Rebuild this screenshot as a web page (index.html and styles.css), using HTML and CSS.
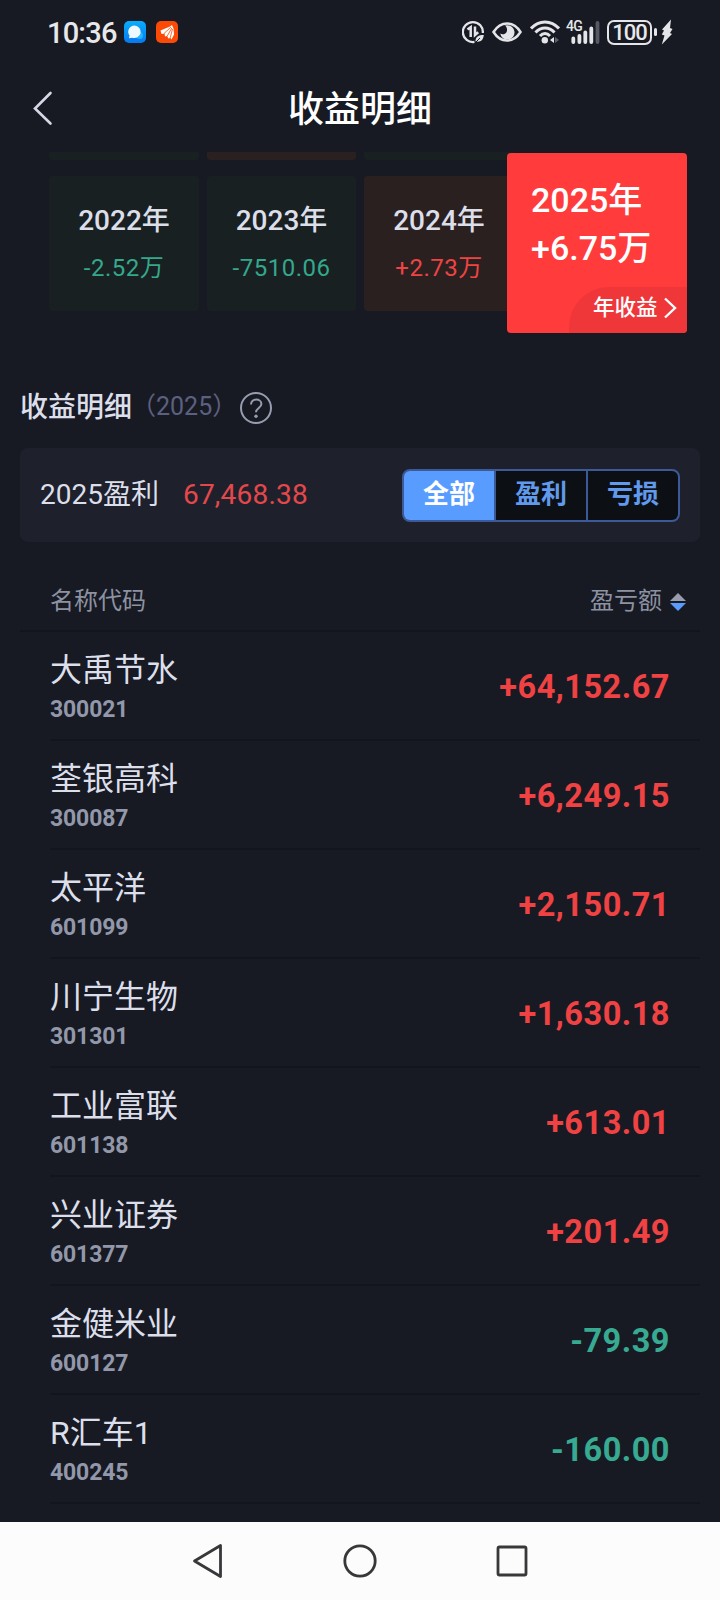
FILE: index.html
```html
<!DOCTYPE html>
<html lang="zh-CN">
<head>
<meta charset="utf-8">
<title>收益明细</title>
<link rel="stylesheet" href="styles.css">
</head>
<body>
<div class="screen">
  <div class="status">
    <span class="clock">10:36</span>
    <svg class="app-chat" width="22" height="22" viewBox="0 0 22 22"><defs><linearGradient id="g" x1="0" y1="0" x2="0" y2="1"><stop offset="0" stop-color="#08aefc"/><stop offset="1" stop-color="#0878ee"/></linearGradient></defs><rect width="22" height="22" rx="5" fill="url(#g)"/><circle cx="15.500" cy="14.500" r="3.500" fill="#22b6ff"/><path d="M10.500 4.500a6.500 6.300 0 1 1-2.500 12.200l-3 .6.500-2.800A6.500 6.300 0 0 1 10.500 4.500z" fill="#eefaff"/></svg>
    <svg class="app-trade" width="22" height="22" viewBox="0 0 22 22"><rect width="22" height="22" rx="5" fill="#fb4a05"/><path d="M4.500 9.500 14 5.500 16 4l1.500 3.500.5 6-2.500 5-1-1.500-2 .5-1.500-2.500-2 .5-.5-3-3 .5z" fill="#fff"/><path d="M8 12.500 15 6M11 15.500 15.800 7M14 17.500 16.500 8" stroke="#fb4a05" stroke-width=".8" fill="none"/></svg>
    <div class="indicators">
      <svg width="22" height="24" viewBox="0 0 22 24" fill="none" stroke="#e4e5e8" stroke-width="2.300"><path d="M12.500 21.900A10 10 0 1 1 20.800 13"/><path d="M5.500 9.500 8.700 7.200V17M13 6.500V15l3.200-2.800" stroke-width="2.500"/><path d="M13.500 21.500c0-5 3-6.500 8.300-6.500-.5 5-3 7.500-8.300 6.500z" fill="#e4e5e8" stroke="none"/><path d="M13 23l5-5" stroke="#171a23" stroke-width="1"/></svg>
      <svg width="30" height="20" viewBox="0 0 30 20"><path d="M1.500 10C5 4.500 9.500 1.500 15 1.500S25 4.500 28.500 10C25 15.500 20.500 18.500 15 18.500S5 15.500 1.500 10z" fill="none" stroke="#e4e5e8" stroke-width="2.500"/><path d="M15 3.200a7.200 7.200 0 1 1-6.800 8.300c2 1.600 5.800.8 6.600-2 .8-2.600-.3-4.800-1.800-6z" fill="#e4e5e8"/></svg>
      <svg width="30" height="24" viewBox="0 0 30 24" fill="none" stroke="#e4e5e8" stroke-width="3"><path d="M1 8.500C9-.2 21-.2 29 8.500M5.500 12.500c5.500-6 13.500-6 19 0M10 16c3-3.200 7-3.200 10 0"/><circle cx="14.800" cy="20.300" r="3.200" fill="#e4e5e8" stroke="none"/><path d="M24 17v6l-4-3z" fill="#e4e5e8" stroke="none"/><path d="M25 17v6l4-3z" fill="#5d616b" stroke="none"/></svg>
      <div class="signal"><span class="gen">4G</span><svg width="30" height="23" viewBox="0 0 30 23" stroke="#e4e5e8" stroke-width="3.800" stroke-linecap="round"><path d="M3.300 17.500v3.500M9.400 15v6M15.300 11.500V21M21.300 7.500V21"/><path d="M27.500 2v19" stroke="#555963"/></svg></div>
      <div class="battery"><span>100</span></div>
      <i class="battery-tip"></i>
      <svg class="bolt" width="12" height="26" viewBox="0 0 12 26"><path d="M10 .5 1 10.500 3 11.500.8 15.500 3.500 16.500.8 25.500 11 15 9 14l2.500-4L9 9z" fill="#e4e5e8"/></svg>
    </div>
  </div>

  <header class="title-bar">
    <svg class="back" width="20" height="36" viewBox="0 0 20 36" fill="none" stroke="#d5d9e6" stroke-width="2.600" stroke-linecap="round"><path d="M17.500 3 2 18.500 17.500 33.500"/></svg>
    <h1>收益明细</h1>
  </header>

  <section class="years">
    <div class="grid previous"><div class="loss"></div><div class="gain"></div><div class="loss"></div></div>
    <div class="grid current">
      <div class="year loss"><b>2022年</b><span>-2.52万</span></div>
      <div class="year loss"><b>2023年</b><span>-7510.06</span></div>
      <div class="year gain"><b>2024年</b><span>+2.73万</span></div>
    </div>
    <div class="selected">
      <b>2025年</b><b>+6.75万</b>
      <div class="more">年收益<svg width="13" height="22" viewBox="0 0 13 22" fill="none" stroke="#fff" stroke-width="2.400"><path d="m1 1.500 10 9.500L1 20.500"/></svg></div>
    </div>
  </section>

  <div class="section-title"><h2>收益明细</h2><span class="period">（2025）</span>
    <svg class="help" width="34" height="34" viewBox="0 0 34 34" fill="none" stroke="#979daf" stroke-width="2"><circle cx="17" cy="17" r="15"/><path d="M12 13.500c0-6.800 10.400-6.200 10.400-.5 0 4-5.400 4-5.400 8.200"/><circle cx="17" cy="25.300" r="1.700" fill="#979daf" stroke="none"/></svg>
  </div>

  <div class="summary">
    <span class="label">2025盈利</span><span class="total">67,468.38</span>
    <div class="tabs"><span class="on">全部</span><span>盈利</span><span>亏损</span></div>
  </div>

  <div class="table-head"><span>名称代码</span><span class="sort">盈亏额<svg width="16" height="18" viewBox="0 0 16 18"><path d="M8 0l8 8H0z" fill="#979daf"/><path d="M8 18l8-8H0z" fill="#599cfc"/></svg></span></div>
  <ul class="rows">
    <li><div><p>大禹节水</p><small>300021</small></div><strong class="up">+64,152.67</strong></li>
    <li><div><p>荃银高科</p><small>300087</small></div><strong class="up">+6,249.15</strong></li>
    <li><div><p>太平洋</p><small>601099</small></div><strong class="up">+2,150.71</strong></li>
    <li><div><p>川宁生物</p><small>301301</small></div><strong class="up">+1,630.18</strong></li>
    <li><div><p>工业富联</p><small>601138</small></div><strong class="up">+613.01</strong></li>
    <li><div><p>兴业证券</p><small>601377</small></div><strong class="up">+201.49</strong></li>
    <li><div><p>金健米业</p><small>600127</small></div><strong class="down">-79.39</strong></li>
    <li><div><p>R汇车1</p><small>400245</small></div><strong class="down">-160.00</strong></li>
  </ul>

  <nav class="system-nav">
    <svg width="32" height="36" viewBox="0 0 32 36"><path d="M28.500 2.500v31L2.500 18z"/></svg>
    <svg width="36" height="36" viewBox="0 0 36 36"><circle cx="18" cy="18" r="15.200"/></svg>
    <svg width="36" height="36" viewBox="0 0 36 36"><rect x="4" y="4" width="28" height="28" rx="1.500"/></svg>
  </nav>
</div>
</body>
</html>
```
FILE: styles.css
```css
* { box-sizing: border-box; }
body { margin: 0; background: #171a23; font-family: Roboto, "Noto Sans CJK SC", sans-serif; color: #dcdfea; }
h1, h2, p, ul { margin: 0; padding: 0; font-weight: 400; }
svg { display: block; flex: none; }
.screen { width: 720px; height: 1600px; overflow: hidden; display: flex; flex-direction: column; }
.status { height: 64px; flex: none; display: flex; align-items: center; padding: 0 46px 0 47px; color: #e8e8ea; }
.clock { width: 77px; font-size: 29px; line-height: 62px; padding-top: 2px; font-weight: 500; letter-spacing: -.8px; }
.app-trade { margin-left: 10px; }
.indicators { margin-left: auto; display: flex; align-items: center; }
.indicators > svg:nth-child(2) { margin-left: 8px; }
.indicators > svg:nth-child(3) { margin-left: 8px; }
.signal { position: relative; width: 32px; margin-left: 8px; padding-left: 2px; }
.gen { position: absolute; left: -2px; top: -1px; font-size: 14px; line-height: 13px; font-weight: 500; letter-spacing: -.8px; }
.battery { width: 45px; height: 25px; margin-left: 7px; border: 2px solid #e4e5e8; border-radius: 7px; font-size: 22px; line-height: 22px; font-weight: 500; text-align: center; letter-spacing: -1px; }
.battery-tip { width: 3px; height: 8px; margin-left: 2px; border-radius: 2px; background: #e4e5e8; }
.bolt { margin-left: 4px; margin-right: 1px; }
.title-bar { height: 88px; flex: none; display: grid; grid-template-columns: 33px 1fr 33px; align-items: center; }
.back { margin-left: 33px; }
.title-bar h1 { text-align: center; font-size: 36px; line-height: 40px; padding-top: 3px; font-weight: 500; color: #fff; }
.years { position: relative; height: 208px; flex: none; padding-left: 49px; }
.grid { display: grid; grid-template-columns: 150px 149px 150px; column-gap: 8px; }
.previous { height: 8px; }
.previous div { border-radius: 0 0 4px 4px; }
.current { height: 135px; margin-top: 16px; }
.loss { background: #192021; }
.gain { background: #2b2020; }
.year { border-radius: 4px; display: flex; flex-direction: column; align-items: center; padding-top: 27px; }
.year b { font-size: 28px; line-height: 36px; font-weight: 500; }
.year span { font-size: 24px; line-height: 34px; margin-top: 12px; letter-spacing: .5px; color: #34a88c; }
.year.gain span { color: #ee4444; }
.selected { position: absolute; left: 507px; top: 1px; width: 180px; height: 180px; border-radius: 4px; overflow: hidden; background: #ff3b3c; color: #fff; padding: 23px 0 0 24px; display: flex; flex-direction: column; }
.selected b { font-size: 34px; line-height: 48px; font-weight: 500; }
.more { margin: auto 0 0 38px; height: 46px; border-radius: 40px 0 0; background: #ef3739; padding-left: 24px; display: flex; align-items: center; gap: 6px; font-size: 21.500px; line-height: 42px; font-weight: 500; padding-bottom: 5px; }
.section-title { height: 88px; flex: none; display: flex; align-items: center; padding: 7px 0 0 20px; }
.section-title h2 { width: 112px; font-size: 28px; line-height: 40px; font-weight: 500; white-space: nowrap; }
.period { width: 108px; font-size: 25px; line-height: 36px; color: #5c6080; white-space: nowrap; margin-left: -1px; padding-bottom: 2px; }
.summary { margin: 0 20px; height: 94px; flex: none; display: flex; align-items: center; padding: 0 20px; border-radius: 8px; background: #1e212c; }
.label { width: 143px; font-size: 28px; line-height: 40px; padding-bottom: 1px; }
.total { font-size: 28px; line-height: 40px; letter-spacing: .2px; color: #e5484b; padding-bottom: 1px; }
.tabs { margin-left: auto; width: 278px; height: 53px; display: grid; grid-template-columns: 1fr 1fr 1fr; gap: 2px; border: 2px solid #3c5a98; border-radius: 8px; overflow: hidden; background: #3c5a98; }
.tabs span { background: #0c1014; text-align: center; font-size: 26px; line-height: 46px; font-weight: 700; color: #619aec; }
.tabs .on { background: #599cff; color: #fff; }
.table-head { margin: 0 20px; height: 90px; flex: none; display: flex; justify-content: space-between; align-items: flex-start; border-bottom: 2px solid #12151c; padding: 39px 14px 0 30px; font-size: 24px; line-height: 40px; color: #8d92a2; }
.sort { display: flex; align-items: center; gap: 8px; }
.sort svg { margin-top: 1px; }
.rows { list-style: none; flex: 1; margin: 0 20px 0 50px; }
.rows li { height: 109px; border-bottom: 2px solid #12151c; display: flex; justify-content: space-between; padding-right: 30px; }
.rows p { font-size: 32px; line-height: 44px; margin-top: 16px; }
.rows small { display: block; font-size: 23px; line-height: 30px; margin-top: 3px; font-weight: 700; letter-spacing: -.15px; color: #9298aa; }
.rows strong { font-size: 32.500px; line-height: 111px; letter-spacing: .5px; font-weight: 700; }
.up { color: #f04243; }
.down { color: #38aa92; }
.system-nav { height: 78px; flex: none; background: #fcfcfc; display: flex; justify-content: center; align-items: center; gap: 116px; padding-left: 6px; fill: none; stroke: #38383a; stroke-width: 2.800; stroke-linejoin: round; }
.system-nav svg:first-child { margin-left: -4px; margin-right: 2px; }
```
